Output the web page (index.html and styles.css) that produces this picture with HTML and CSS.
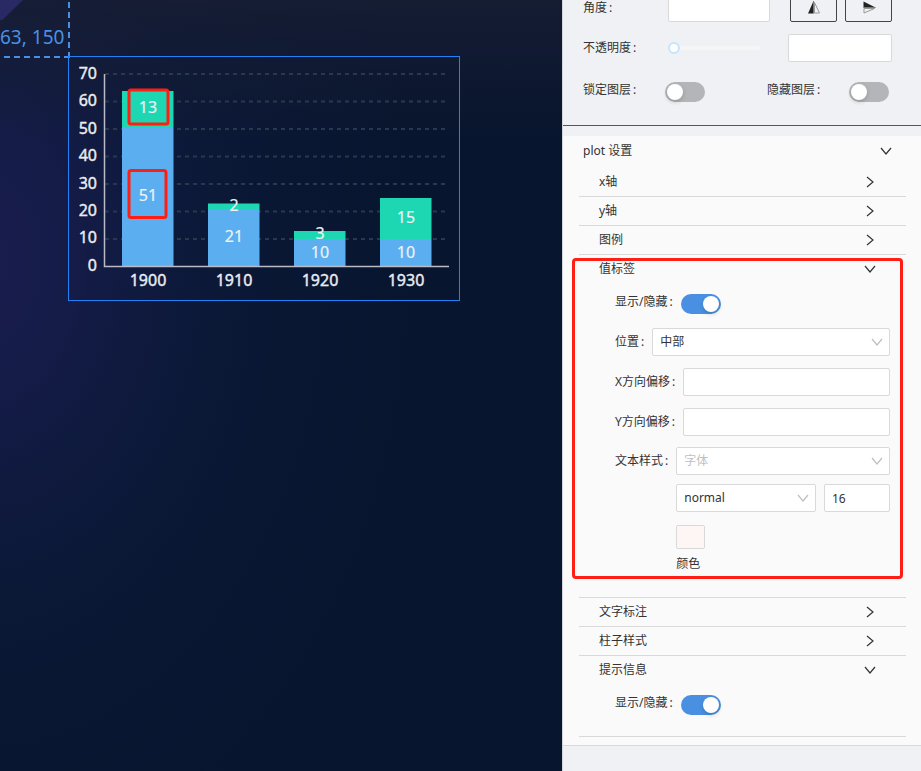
FILE: index.html
```html
<!DOCTYPE html>
<html lang="zh-CN">
<head>
<meta charset="utf-8">
<title>plot 设置</title>
<link rel="stylesheet" href="styles.css">
</head>
<body>
<div class="app">
  <main class="canvas">
    <div class="backdrop-shape"></div>
    <div class="guide"><span class="guide-text">63, 150</span></div>
    <div class="widget">
      <svg class="chart" viewBox="0 0 392 245" role="img" aria-label="plot">
        <g class="grid">
          <path d="M37 18H379M37 45.500H379M37 73H379M37 100.500H379M37 128H379M37 155.500H379M37 183H379"/>
        </g>
        <g class="bar-base">
          <rect x="54" y="71" width="51.500" height="139.500"/>
          <rect x="140" y="153" width="51.500" height="57.500"/>
          <rect x="226" y="183" width="51.500" height="27.500"/>
          <rect x="312" y="183" width="51.500" height="27.500"/>
        </g>
        <g class="bar-top">
          <rect x="54" y="35" width="51.500" height="36"/>
          <rect x="140" y="147.500" width="51.500" height="5.500"/>
          <rect x="226" y="175" width="51.500" height="8"/>
          <rect x="312" y="142" width="51.500" height="41"/>
        </g>
        <path class="axis" d="M36.500 18V210.500H381"/>
        <g class="y-labels">
          <text x="29" y="23">70</text>
          <text x="29" y="50">60</text>
          <text x="29" y="78">50</text>
          <text x="29" y="105">40</text>
          <text x="29" y="133">30</text>
          <text x="29" y="160">20</text>
          <text x="29" y="187">10</text>
          <text x="29" y="215">0</text>
        </g>
        <g class="x-labels">
          <text x="80" y="230">1900</text>
          <text x="166" y="230">1910</text>
          <text x="252" y="230">1920</text>
          <text x="338" y="230">1930</text>
        </g>
        <g class="values">
          <text x="80" y="57">13</text>
          <text x="80" y="145">51</text>
          <text x="166" y="155">2</text>
          <text x="166" y="186">21</text>
          <text x="252" y="183">3</text>
          <text x="252" y="202">10</text>
          <text x="338" y="167">15</text>
          <text x="338" y="202">10</text>
        </g>
        <g class="marks">
          <rect x="61" y="34" width="39" height="34" rx="2"/>
          <rect x="61" y="114.500" width="37" height="47" rx="2"/>
        </g>
      </svg>
    </div>
  </main>

  <aside class="panel">
    <section class="layer">
      <div class="row">
        <label class="cap" for="angle">角度<i>:</i></label>
        <input class="box angle" id="angle" type="text">
        <div class="flips">
          <button class="flip" type="button" aria-label="水平翻转">
            <svg width="14" height="14" viewBox="0 0 14 14"><path d="M6.500 0V12.500H1Z" fill="#222"/><path d="M7.500 1.500V12H12.500Z" fill="none" stroke="#999"/><path d="M6.500 0V12.500" stroke="#777"/></svg>
          </button>
          <button class="flip" type="button" aria-label="垂直翻转">
            <svg width="14" height="14" viewBox="0 0 14 14"><path d="M1.500 0.500V6.500H13.500Z" fill="#222"/><path d="M2 7.500V12L12.500 7.500Z" fill="none" stroke="#999"/><path d="M1.500 6.500H13.500" stroke="#777"/></svg>
          </button>
        </div>
      </div>
      <div class="row">
        <label class="cap" for="opacity">不透明度<i>:</i></label>
        <input class="slider" id="opacity" type="range" min="0" max="100" value="0">
        <input class="box opacity" type="text" aria-label="不透明度">
      </div>
      <div class="row split">
        <div class="pair"><label class="cap" for="lock">锁定图层<i>:</i></label><input class="switch" id="lock" type="checkbox"></div>
        <div class="pair"><label class="cap" for="hide">隐藏图层<i>:</i></label><input class="switch" id="hide" type="checkbox"></div>
      </div>
    </section>

    <section class="plot">
      <button class="head" type="button">plot 设置
        <svg class="chev" viewBox="0 0 12 12"><path d="M1 3L6 9L11 3"/></svg>
      </button>
      <div class="groups">
        <div class="group"><button class="sub" type="button">x轴<svg class="chev" viewBox="0 0 12 12"><path d="M3 1L9 6L3 11"/></svg></button></div>
        <div class="group"><button class="sub" type="button">y轴<svg class="chev" viewBox="0 0 12 12"><path d="M3 1L9 6L3 11"/></svg></button></div>
        <div class="group"><button class="sub" type="button">图例<svg class="chev" viewBox="0 0 12 12"><path d="M3 1L9 6L3 11"/></svg></button></div>
        <div class="group marked">
          <button class="sub" type="button">值标签<svg class="chev" viewBox="0 0 12 12"><path d="M1 3L6 9L11 3"/></svg></button>
          <div class="body">
            <div class="field"><label for="show-label">显示/隐藏<i>:</i></label><input class="switch" id="show-label" type="checkbox" checked></div>
            <div class="field"><label for="pos">位置<i>:</i></label>
              <div class="pick"><select class="box" id="pos"><option>中部</option></select><svg class="chev" viewBox="0 0 12 12"><path d="M1 3L6 9L11 3"/></svg></div></div>
            <div class="field"><label for="dx">X方向偏移<i>:</i></label><input class="box fill" id="dx" type="text"></div>
            <div class="field"><label for="dy">Y方向偏移<i>:</i></label><input class="box fill" id="dy" type="text"></div>
            <div class="text-style">
              <label for="family">文本样式<i>:</i></label>
              <div class="stack">
                <div class="pick"><select class="box empty" id="family"><option>字体</option></select><svg class="chev" viewBox="0 0 12 12"><path d="M1 3L6 9L11 3"/></svg></div>
                <div class="duo">
                  <div class="pick"><select class="box" aria-label="字重"><option>normal</option></select><svg class="chev" viewBox="0 0 12 12"><path d="M1 3L6 9L11 3"/></svg></div>
                  <input class="box size" type="text" value="16" aria-label="字号">
                </div>
                <div class="color"><button class="swatch" id="color" type="button" aria-labelledby="color-name"></button><span id="color-name">颜色</span></div>
              </div>
            </div>
          </div>
        </div>
        <div class="group"><button class="sub" type="button">文字标注<svg class="chev" viewBox="0 0 12 12"><path d="M3 1L9 6L3 11"/></svg></button></div>
        <div class="group"><button class="sub" type="button">柱子样式<svg class="chev" viewBox="0 0 12 12"><path d="M3 1L9 6L3 11"/></svg></button></div>
        <div class="group">
          <button class="sub" type="button">提示信息<svg class="chev" viewBox="0 0 12 12"><path d="M1 3L6 9L11 3"/></svg></button>
          <div class="body tip">
            <div class="field"><label for="show-tip">显示/隐藏<i>:</i></label><input class="switch" id="show-tip" type="checkbox" checked></div>
          </div>
        </div>
      </div>
    </section>
  </aside>
</div>
</body>
</html>
```
FILE: styles.css
```css
* { box-sizing: border-box; }

body {
  margin: 0;
  font: 12px/18px "Noto Sans", "Noto Sans CJK SC", sans-serif;
  color: #333;
}

button, input, select { font: inherit; color: inherit; margin: 0; }

.app { display: flex; height: 100vh; overflow: hidden; }

/* Canvas */
.canvas {
  position: relative;
  flex: 1;
  min-width: 0;
  overflow: hidden;
  background:
    linear-gradient(rgba(24, 30, 52, .8), rgba(22, 28, 50, 0) 140px),
    radial-gradient(ellipse 440px 620px at -20px 260px, #1a1d50, #151c48 20%, #0f1a3e 38%, #0b1836 55%, #08152e),
    #08152e;
}

.backdrop-shape {
  position: absolute;
  left: 0;
  top: 0;
  width: 23px;
  height: 20px;
  background: #292a65;
  clip-path: polygon(0 0, 100% 0, 10% 100%, 0 100%);
}

.guide {
  position: absolute;
  left: 0;
  top: 0;
  width: 70px;
  height: 58px;
  padding: 24px 6px 0 0;
  background:
    repeating-linear-gradient(90deg, transparent 0 4px, #4a90e2 4px 10px) left bottom / 100% 2px no-repeat,
    repeating-linear-gradient(transparent 0 2px, #4a90e2 2px 8px, transparent 8px 10px) right top / 2px 100% no-repeat;
  text-align: right;
  white-space: nowrap;
}

.guide-text { font-size: 19px; line-height: 26px; color: #4a90e2; }

.widget {
  position: absolute;
  left: 68px;
  top: 56px;
  width: 392px;
  height: 245px;
  outline: 1px solid #2680f5;
  outline-offset: -1px;
}

.chart { display: block; width: 100%; height: 100%; font-size: 16px; }
.grid path { stroke: #2b374c; stroke-width: 2; stroke-dasharray: 4 4; }
.axis { fill: none; stroke: #b9bcc6; stroke-width: 1.500; }
.bar-base { fill: #5baff0; }
.bar-top { fill: #1dd6b2; }
.y-labels, .x-labels { fill: #ebecf0; stroke: #ebecf0; stroke-width: .4; }
.y-labels { text-anchor: end; }
.x-labels { text-anchor: middle; }
.values { fill: #f0f2f4; text-anchor: middle; stroke: #f0f2f4; stroke-width: .2; }
.marks rect { fill: none; stroke: #ff1e14; stroke-width: 3; }

/* Settings panel */
.panel {
  flex: 0 0 359px;
  border-left: 1px solid #d5d6d9;
  background: #f0f1f5;
  overflow: hidden;
}

label { white-space: nowrap; }
label i { font-style: normal; margin: 0 8px 0 2px; }

.layer {
  display: flex;
  flex-direction: column;
  gap: 12px;
  margin-top: -6px;
  padding: 0 29px 19px 20px;
  border-bottom: 1px solid #55555b;
}

.row { display: flex; align-items: center; min-height: 28px; }
.cap { flex: 0 0 85px; }
.pair { display: flex; align-items: center; }
.pair .cap { flex-basis: 82px; }
.split { justify-content: space-between; min-height: 32px; padding-right: 3px; }

.box {
  display: block;
  height: 28px;
  min-width: 0;
  padding: 0 7px;
  border: 1px solid #d9d9d9;
  border-radius: 2px;
  background: #fff;
}

.angle { width: 102px; }
.opacity { width: 104px; margin-left: auto; }
.fill { flex: 1; }

.flips { display: flex; gap: 8px; margin-left: auto; }

.flip {
  display: flex;
  align-items: center;
  justify-content: center;
  width: 47px;
  height: 27px;
  padding: 0;
  border: 1px solid #444;
  border-radius: 2px;
  background: transparent;
}

.slider {
  appearance: none;
  width: 92px;
  height: 12px;
  background: linear-gradient(#f5f5f5, #f5f5f5) center / 100% 4px no-repeat;
}

.slider::-webkit-slider-thumb {
  appearance: none;
  width: 12px;
  height: 12px;
  border: 2px solid #c3e5ff;
  border-radius: 50%;
  background: #fff;
}

.switch {
  appearance: none;
  flex: none;
  width: 40px;
  height: 20px;
  padding: 2px;
  margin-top: 4px;
  border-radius: 10px;
  background: #b4b5b8;
}

.switch::before {
  content: "";
  display: block;
  width: 16px;
  height: 16px;
  border-radius: 50%;
  background: #fff;
  box-shadow: 0 2px 4px rgba(0, 35, 11, .2);
}

.switch:checked { background: #4a90e2; }
.switch:checked::before { margin-left: auto; }

.plot {
  margin-top: 10px;
  padding-bottom: 8px;
  border-bottom: 1px solid #d9d9d9;
  background: #fafafa;
}

.head, .sub {
  display: flex;
  align-items: center;
  justify-content: space-between;
  width: 100%;
  border: 0;
  background: none;
  text-align: left;
}

.head { height: 32px; padding: 0 29px 2px 20px; }
.sub { height: 28px; padding: 0 30px 0 20px; }

.chev {
  flex: none;
  width: 12px;
  height: 12px;
  fill: none;
  stroke: #333;
  stroke-width: 1.200;
}

.groups { padding: 0 15px 0 16px; }
.group { border-bottom: 1px solid #d9d9d9; }

.marked { position: relative; }

.marked::after {
  content: "";
  position: absolute;
  inset: 3px 3px 18px -7px;
  border: 3px solid #ff1e14;
  border-radius: 4px;
  pointer-events: none;
}

.body { margin-top: -1px; padding: 0 16px 24px 36px; }
.tip { padding-bottom: 13px; }
.field { display: flex; align-items: center; height: 40px; }

.pick { position: relative; flex: 1; min-width: 0; }
.pick select { appearance: none; width: 100%; }
.pick .empty { color: #bfbfbf; }

.pick .chev {
  position: absolute;
  right: 7px;
  top: 8px;
  stroke: #bfbfbf;
  pointer-events: none;
}

.text-style { display: flex; padding-top: 5px; }
.text-style label { line-height: 28px; }
.stack { display: flex; flex: 1; flex-direction: column; gap: 9px; }
.duo { display: flex; gap: 8px; }
.size { width: 66px; }
.color { display: flex; flex-direction: column; align-items: flex-start; gap: 6px; padding-top: 4px; }

.swatch {
  width: 29px;
  height: 24px;
  padding: 0;
  border: 1px solid #d9d9d9;
  border-radius: 2px;
  background: #fdf6f4;
}
```
